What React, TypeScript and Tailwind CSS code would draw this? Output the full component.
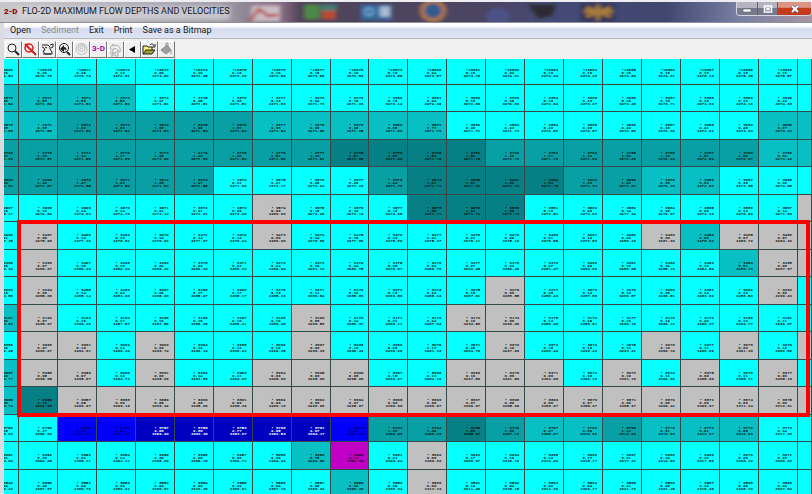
import type { ReactNode } from "react";

const FILL: Record<string, string> = {
  c: "bg-[#06ffff] text-[#062c2c]",
  t: "bg-[#08c0c4] text-[#042424]",
  d: "bg-[#08a0a4] text-[#031c1c]",
  k: "bg-[#068084] text-[#021414]",
  g: "bg-[#c0c0c0] text-[#1c1c1c]",
  b: "bg-[#0000fb] text-[#000060]",
  n: "bg-[#0000c0] text-white",
  m: "bg-[#c000c4] text-[#200020]",
};

type Row = { first: number; fills: string; depths: string; levels: string };

// Each row: id of the first full cell, depth class per cell, depths, water levels.
const ROWS: Row[] = [
  { first: 10070, fills: "cccccccccccccccccccccc",
    depths: "0.20 0.20 0.20 0.19 0.20 0.18 0.16 0.16 0.16 0.16 0.16 0.24 0.16 0.24 0.19 0.16 0.18 0.16 0.16 0.16 0.16",
    levels: "3272.54 3272.70 3272.74 3272.81 3273.03 3273.25 3273.36 3273.54 3273.50 3273.53 3273.55 3273.57 3273.79 3274.01 3274.24 3274.48 3274.84 3274.91 3275.13 3275.35 3275.57" },
  { first: 9971, fills: "ttttcccccccccccccccccc",
    depths: "0.56 0.56 0.56 0.56 0.47 0.45 0.36 0.33 0.22 0.16 0.16 0.24 0.16 0.16 0.18 0.19 0.18 0.19 0.18 0.19 0.24",
    levels: "3271.54 3271.54 3271.53 3271.51 3271.51 3271.51 3271.51 3271.53 3271.73 3271.93 3272.14 3272.36 3272.60 3272.82 3273.04 3273.27 3273.49 3273.71 3273.93 3274.16 3274.36" },
  { first: 9871, fills: "ttdddddtttttcccccccctt",
    depths: "0.96 0.98 1.02 1.03 1.05 1.06 1.01 0.98 0.96 0.96 0.85 0.71 0.30 0.23 0.20 0.20 0.20 0.20 0.21 0.45 0.67",
    levels: "3271.55 3271.56 3271.56 3271.54 3271.53 3271.53 3271.54 3271.54 3271.60 3271.65 3271.66 3271.70 3271.71 3271.73 3272.53 3272.57 3272.53 3272.92 3273.21 3273.24 3273.34" },
  { first: 9770, fills: "dddddddddkkkkdddddddtt",
    depths: "1.27 1.30 1.34 1.37 1.45 1.48 1.46 1.51 1.49 1.51 1.56 1.54 1.52 1.49 1.31 1.14 1.04 1.10 1.01 1.00 0.84",
    levels: "3271.60 3271.57 3271.55 3271.53 3271.53 3271.53 3271.53 3271.56 3271.61 3271.66 3271.69 3271.70 3271.70 3271.73 3271.76 3271.83 3272.08 3272.24 3272.53 3272.67 3273.43" },
  { first: 9669, fills: "ddddddccccdkkkkddttccc",
    depths: "1.43 1.43 1.47 1.43 1.48 1.47 0.31 0.21 0.20 0.20 1.44 1.61 1.61 1.62 1.63 1.33 1.03 0.98 0.83 0.30 0.30",
    levels: "3271.63 3271.57 3271.55 3271.54 3271.53 3271.55 3271.90 3273.17 3273.24 3273.23 3271.70 3271.71 3271.71 3271.73 3271.75 3271.83 3271.91 3272.30 3272.53 3273.05 3274.05" },
  { first: 9568, fills: "cccccccgccckkkcccccccg",
    depths: "0.10 0.19 0.14 0.14 0.21 0.21 0.20 0.06 0.16 0.19 0.10 1.50 1.61 1.60 0.16 0.20 0.14 0.20 0.20 0.14 0.14",
    levels: "3275.17 3274.84 3274.83 3274.76 3273.13 3273.21 3273.20 3280.06 3273.26 3273.14 3274.65 3271.71 3271.71 3271.73 3272.51 3273.03 3277.34 3272.87 3273.33 3276.04 3277.83" },
  { first: 9467, fills: "cgcccccgcccccccccgtggg",
    depths: "0.21 0.06 0.13 0.19 0.13 0.14 0.14 0.06 0.14 0.18 0.19 0.21 0.21 0.20 0.21 0.12 0.20 0.09 0.88 0.07 0.07",
    levels: "3277.35 3275.06 3277.36 3275.51 3276.62 3277.07 3276.24 3280.06 3276.66 3277.86 3275.86 3275.37 3275.11 3275.10 3275.55 3276.59 3280.10 3281.03 3275.63 3280.72 3284.32" },
  { first: 9366, fills: "cgccccccccccccccccctgg",
    depths: "0.26 0.07 0.18 0.16 0.22 0.23 0.23 0.23 0.16 0.24 0.26 0.24 0.27 0.24 0.27 0.20 0.16 0.12 0.19 0.81 0.08",
    levels: "3280.34 3280.07 3280.43 3280.34 3280.32 3280.33 3280.33 3280.84 3281.13 3280.75 3276.07 3280.76 3280.45 3280.46 3281.47 3283.66 3286.65 3285.16 3284.54 3280.73 3287.67" },
  { first: 9264, fills: "cgcccccccccccgccccccgc",
    depths: "0.16 0.06 0.14 0.20 0.20 0.17 0.17 0.19 0.11 0.12 0.16 0.24 0.16 0.09 0.20 0.14 0.14 0.20 0.14 0.16 0.09",
    levels: "3283.50 3285.06 3285.14 3283.00 3285.20 3285.27 3285.17 3285.33 3286.54 3285.53 3283.56 3285.34 3287.01 3288.55 3288.43 3287.56 3290.57 3290.51 3289.62 3288.56 3290.23" },
  { first: 9162, fills: "tgccccccgcccggcccccccc",
    depths: "0.82 0.07 0.10 0.17 0.16 0.16 0.16 0.16 0.08 0.14 0.21 0.24 0.10 0.08 0.13 0.20 0.16 0.12 0.22 0.13 0.11",
    levels: "3288.53 3285.67 3290.10 3287.57 3287.56 3288.36 3288.41 3289.46 3290.58 3288.37 3286.11 3287.64 3292.56 3290.08 3288.46 3288.51 3290.16 3290.12 3290.37 3294.77 3296.67" },
  { first: 9060, fills: "cggcgcccgccccgcccgcgcg",
    depths: "0.40 0.07 0.10 0.12 0.09 0.12 0.12 0.12 0.09 0.12 0.20 0.17 0.20 0.10 0.16 0.12 0.12 0.10 0.11 0.09 0.12",
    levels: "3290.45 3290.07 3292.01 3290.34 3290.74 3290.14 3290.23 3290.25 3290.39 3290.43 3290.20 3291.33 3294.76 3297.06 3298.44 3296.43 3299.21 3300.10 3296.66 3301.36 3300.59" },
  { first: 8958, fills: "tggcgccgggccgggcgcgcgc",
    depths: "0.42 0.05 0.07 0.19 0.06 0.14 0.11 0.06 0.06 0.08 0.15 0.13 0.10 0.08 0.06 0.10 0.10 0.11 0.06 0.11 0.09",
    levels: "3294.77 3295.05 3295.07 3294.73 3295.06 3293.56 3294.60 3295.06 3295.06 3295.08 3293.27 3294.16 3297.50 3301.50 3302.08 3300.10 3301.16 3304.62 3305.06 3305.11 3305.16" },
  { first: 8856, fills: "tkgggggggggggggggggggg",
    depths: "0.86 1.73 0.05 0.06 0.05 0.06 0.06 0.06 0.06 0.07 0.06 0.06 0.07 0.06 0.06 0.07 0.06 0.06 0.06 0.06 0.06",
    levels: "3296.74 3296.60 3296.67 3296.10 3296.42 3295.66 3295.30 3296.10 3296.06 3295.07 3300.06 3296.67 3300.07 3305.06 3306.67 3305.07 3305.67 3306.41 3306.67 3311.34 3312.31" },
  { first: 8754, fills: "ccbbnnnnnbddkdttdtttcc",
    depths: "0.15 0.17 2.06 2.24 2.68 2.80 2.77 2.65 2.67 2.10 1.30 1.40 1.50 1.06 0.97 0.80 1.13 0.81 0.81 0.85 0.34",
    levels: "3300.23 3300.63 3301.26 3301.56 3302.63 3303.30 3303.67 3303.53 3304.17 3304.24 3304.26 3305.33 3305.27 3307.10 3308.67 3310.80 3312.03 3313.09 3313.27 3314.63 3317.33" },
  { first: 8652, fills: "cccccccctmcgcccccccccc",
    depths: "0.31 0.30 0.22 0.14 0.30 0.26 0.46 0.36 0.75 4.16 0.21 0.06 0.17 0.16 0.13 0.17 0.21 0.14 0.32 0.20 0.20",
    levels: "3303.04 3304.25 3305.11 3303.11 3305.20 3305.18 3304.73 3304.43 3304.66 3304.36 3306.24 3306.62 3308.67 3310.16 3313.42 3315.17 3317.31 3314.53 3317.52 3320.10 3320.43" },
  { first: 8550, fills: "ccccccccctcgcccccccccc",
    depths: "0.24 0.40 0.24 0.30 0.24 0.20 0.22 0.24 0.26 0.80 0.20 0.06 0.14 0.22 0.22 0.24 0.21 0.20 0.16 0.20 0.20",
    levels: "3306.43 3307.67 3306.76 3306.21 3306.07 3310.30 3306.61 3307.16 3306.34 3306.30 3306.34 3313.74 3311.46 3315.15 3314.36 3320.17 3321.73 3321.45 3315.40 3325.10 3327.04" },
];

function DepthGrid() {
  return (
    <table className="w-full table-fixed border-separate border-spacing-0 text-[4px] leading-[3px] font-bold" aria-label="Maximum flow depths">
      <colgroup>
        <col className="w-[15px]" />
        {Array.from({ length: 20 }, (_, i) => <col key={i} />)}
        <col className="w-[14px]" />
      </colgroup>
      <tbody>
        {ROWS.map((row, r) => {
          const depths = row.depths.split(" ");
          const levels = row.levels.split(" ");
          const size = r === 0 ? "h-[26px] pt-[10px]" : r % 2 ? "h-[27px] pt-[12px]" : "h-[28px] pt-[12px]";
          return (
            <tr key={row.first}>
              {Array.from({ length: 22 }, (_, i) => (
                <td key={i} className={`p-0 align-top ${FILL[row.fills[i]]}`}>
                  <div className={`flex flex-col items-end overflow-hidden whitespace-nowrap border-r border-b border-[#374848] pr-[5px] ${size}`}>
                    {i < 21 && (
                      <>
                        <span className="whitespace-pre">{`•${row.first > 10000 ? "" : " "}${row.first + i - 1}`}</span>
                        <span className="pr-[5px]">{depths[i]}</span>
                        <span>{levels[i]}</span>
                      </>
                    )}
                  </div>
                </td>
              ))}
            </tr>
          );
        })}
      </tbody>
    </table>
  );
}

function Tool({ label, children }: { label: string; children: ReactNode }) {
  return (
    <button type="button" aria-label={label} className="flex h-[17px] w-[17px] items-center justify-center border border-t-white border-r-[#777] border-b-[#777] border-l-white bg-[#f0f0f0]">
      {children}
    </button>
  );
}

function Glyph({ children }: { children: ReactNode }) {
  return <svg viewBox="0 0 15 15" className="h-[15px] w-[15px]" fill="none" stroke="#222" strokeWidth="1">{children}</svg>;
}

function Backdrop() {
  return (
    <svg className="absolute inset-0 h-full w-full" viewBox="0 0 812 23" preserveAspectRatio="none" aria-hidden="true">
      <defs>
        <linearGradient id="glass">
          <stop offset="0" stopColor="#c9c9cb" />
          <stop offset=".12" stopColor="#b9b7bf" />
          <stop offset=".27" stopColor="#a5a1ad" />
          <stop offset=".3" stopColor="#8f8795" />
          <stop offset=".345" stopColor="#8c6f86" />
          <stop offset=".37" stopColor="#50445a" />
          <stop offset=".62" stopColor="#4a4564" />
          <stop offset=".67" stopColor="#454b78" />
          <stop offset=".82" stopColor="#41466f" />
          <stop offset=".91" stopColor="#7880a4" />
          <stop offset="1" stopColor="#a793a3" />
        </linearGradient>
        <filter id="haze"><feGaussianBlur stdDeviation="2" /></filter>
      </defs>
      <rect width="812" height="23" fill="url(#glass)" />
      <g filter="url(#haze)">
        <rect x="18" y="5" width="212" height="15" fill="#dcdcde" opacity=".6" />
        <path d="M252 4h28v18h-30z" fill="#c9bdc2" />
        <path d="M250 22l9-14 9 8 10-1" stroke="#b43b45" strokeWidth="3" fill="none" />
        <rect x="304" y="3" width="16" height="17" fill="#4e8746" />
        <rect x="321" y="3" width="16" height="8" fill="#457c72" />
        <rect x="322" y="10" width="14" height="10" fill="#b84b35" />
        <rect x="361" y="3" width="31" height="18" fill="#35679c" />
        <circle cx="369" cy="11" r="4" stroke="#7fb4d8" strokeWidth="2" fill="none" />
        <rect x="380" y="5" width="10" height="12" fill="#a9bdd4" />
        <circle cx="433" cy="10" r="11" stroke="#b07548" strokeWidth="5" fill="#315a8c" />
        <circle cx="498" cy="18" r="12" fill="#4b5793" opacity=".7" />
        <path d="M528 3h28l-4 13-14 3z" fill="#2d2c35" />
        <rect x="581" y="2" width="34" height="20" fill="#2b2d55" />
        <path d="M586 6l25 11M586 17l25-11M598 3v18M584 11h29" stroke="#a77d3b" strokeWidth="4" />
      </g>
    </svg>
  );
}

function TitleBar() {
  return (
    <header className="relative h-[23px] shrink-0 border-t-2 border-t-[#eeeef2] border-b border-b-[#909098]">
      <Backdrop />
      <div className="relative flex justify-between">
        <h1 className="flex h-5 items-center gap-1 pl-1 text-[9px] whitespace-nowrap text-[#16161c]">
          <span className="w-[14px] text-[8px] font-black text-[#8c0612]" aria-hidden="true">2-D</span>
          <span>FLO-2D MAXIMUM FLOW DEPTHS AND VELOCITIES</span>
        </h1>
        <div className="flex h-[14px] overflow-hidden rounded-b border border-t-0 border-[#d5d5df]">
          <button type="button" aria-label="Minimize" className="flex w-[21px] items-center justify-center border-r border-[#5f6076] bg-linear-to-b from-[#b5b5c2] from-45% to-[#77798f] to-50%">
            <svg viewBox="0 0 10 8" className="h-2 w-[10px]"><path d="M1 4h8v3H1z" fill="#fff" stroke="#555a70" strokeWidth=".6" /></svg>
          </button>
          <button type="button" aria-label="Maximize" className="flex w-5 items-center justify-center border-r border-[#5f6076] bg-linear-to-b from-[#b5b5c2] from-45% to-[#77798f] to-50%">
            <svg viewBox="0 0 10 8" className="h-2 w-[10px]"><path d="M1.500 1h7v6h-7zM4 3.500v1h2v-1z" fill="none" stroke="#fff" strokeWidth="1.500" /></svg>
          </button>
          <button type="button" aria-label="Close" className="flex w-[33px] items-center justify-center bg-linear-to-b from-[#dc9484] from-40% to-[#c33a1c] to-50%">
            <svg viewBox="0 0 10 8" className="h-2 w-[10px]"><path d="M2 1l6 6M8 1L2 7" stroke="#444a60" strokeWidth="3" /><path d="M2 1l6 6M8 1L2 7" stroke="#fff" strokeWidth="2" /></svg>
          </button>
        </div>
      </div>
    </header>
  );
}

function Toolbar() {
  return (
    <div role="toolbar" aria-label="Map tools" className="flex h-5 shrink-0 items-center bg-[#f0f0f0] pl-px">
      <Tool label="Zoom"><Glyph><circle cx="6" cy="6" r="4" /><path d="M9 9l4 4" strokeWidth="2" /></Glyph></Tool>
      <Tool label="Cancel zoom"><Glyph><circle cx="6" cy="6" r="4" stroke="#e01818" strokeWidth="1.500" /><path d="M2 2l11 11" stroke="#e01818" strokeWidth="2" /><path d="M9 8l4 4" stroke="#a33" strokeWidth="1" /></Glyph></Tool>
      <Tool label="Pan"><Glyph><path d="M2 3h6l2 2v2l2 3v2H5L3 9l2-1-1-2-2-1M10 3l3-1v3l-2 1M5 5l2 1M3 12h8" /></Glyph></Tool>
      <Tool label="Previous view"><Glyph><circle cx="7" cy="6" r="4.500" /><path d="M3 7l4-4v2c2 0 3 2 2 4-1-2-2-2-2-1v2z" fill="#222" stroke="none" /><path d="M10 10l3 3" strokeWidth="2" /></Glyph></Tool>
      <Tool label="Contours"><Glyph><g stroke="#bcbcbc"><circle cx="7.500" cy="7" r="5.500" /><circle cx="7.500" cy="6" r="3.500" /><circle cx="7.500" cy="5.500" r="1.500" /></g></Glyph></Tool>
      <Tool label="3-D view"><span className="text-[8px] font-bold text-[#a000a0]">3-D</span></Tool>
      <Tool label="Rotate 90 degrees"><Glyph><g stroke="#aaa"><path d="M2 6l3-4v2c5-2 8 1 7 6l-2-1c0-2-2-3-5-2v2z" /><path d="M2 10h3v2H2M5 10v4H3M7 10h3v4H7z" /></g></Glyph></Tool>
      <Tool label="Back"><Glyph><path d="M10 4v7L4 7.500z" fill="#000" stroke="none" /></Glyph></Tool>
      <Tool label="Open file"><Glyph><path d="M1 12V4h4l1 1h4v3" fill="#f4f07c" /><path d="M1 12l3-4h9l-3 4z" fill="#a4a034" /><path d="M8 3c2-2 3-1 4 1M13 2v3h-3" /></Glyph></Tool>
      <Tool label="Fill"><Glyph><path d="M2 8l6-5 4 5-5 4z" fill="#a0a0a0" stroke="#888" /><path d="M7 6V1h2v4M12 8v4" stroke="#999" /></Glyph></Tool>
    </div>
  );
}

export default function App() {
  return (
    <div className="flex h-screen flex-col overflow-hidden bg-[#f0f0f0] font-['Roboto','Liberation_Sans',sans-serif]">
      <TitleBar />
      <div className="flex min-h-0 flex-1 flex-col border-l-4 border-l-[#dcdce0]">
        <nav aria-label="Main menu" className="flex h-4 shrink-0 items-center gap-[10px] border-b border-[#b8b8b8] bg-linear-to-b from-white from-20% via-[#d6dcef] via-40% to-[#dfe4f4] pl-[6px] text-[9px] text-[#1a1a1a]">
          <button type="button">Open</button>
          <button type="button" disabled className="text-[#8b8b8b]">Sediment</button>
          <button type="button">Exit</button>
          <button type="button">Print</button>
          <button type="button">Save as a Bitmap</button>
        </nav>
        <Toolbar />
        <main className="relative min-h-0 flex-1 overflow-hidden font-['Liberation_Mono',monospace]">
          <DepthGrid />
          <div className="absolute top-[161px] right-[2px] left-[13px] h-[197px] border-4 border-[#ff0000]" />
        </main>
      </div>
    </div>
  );
}
